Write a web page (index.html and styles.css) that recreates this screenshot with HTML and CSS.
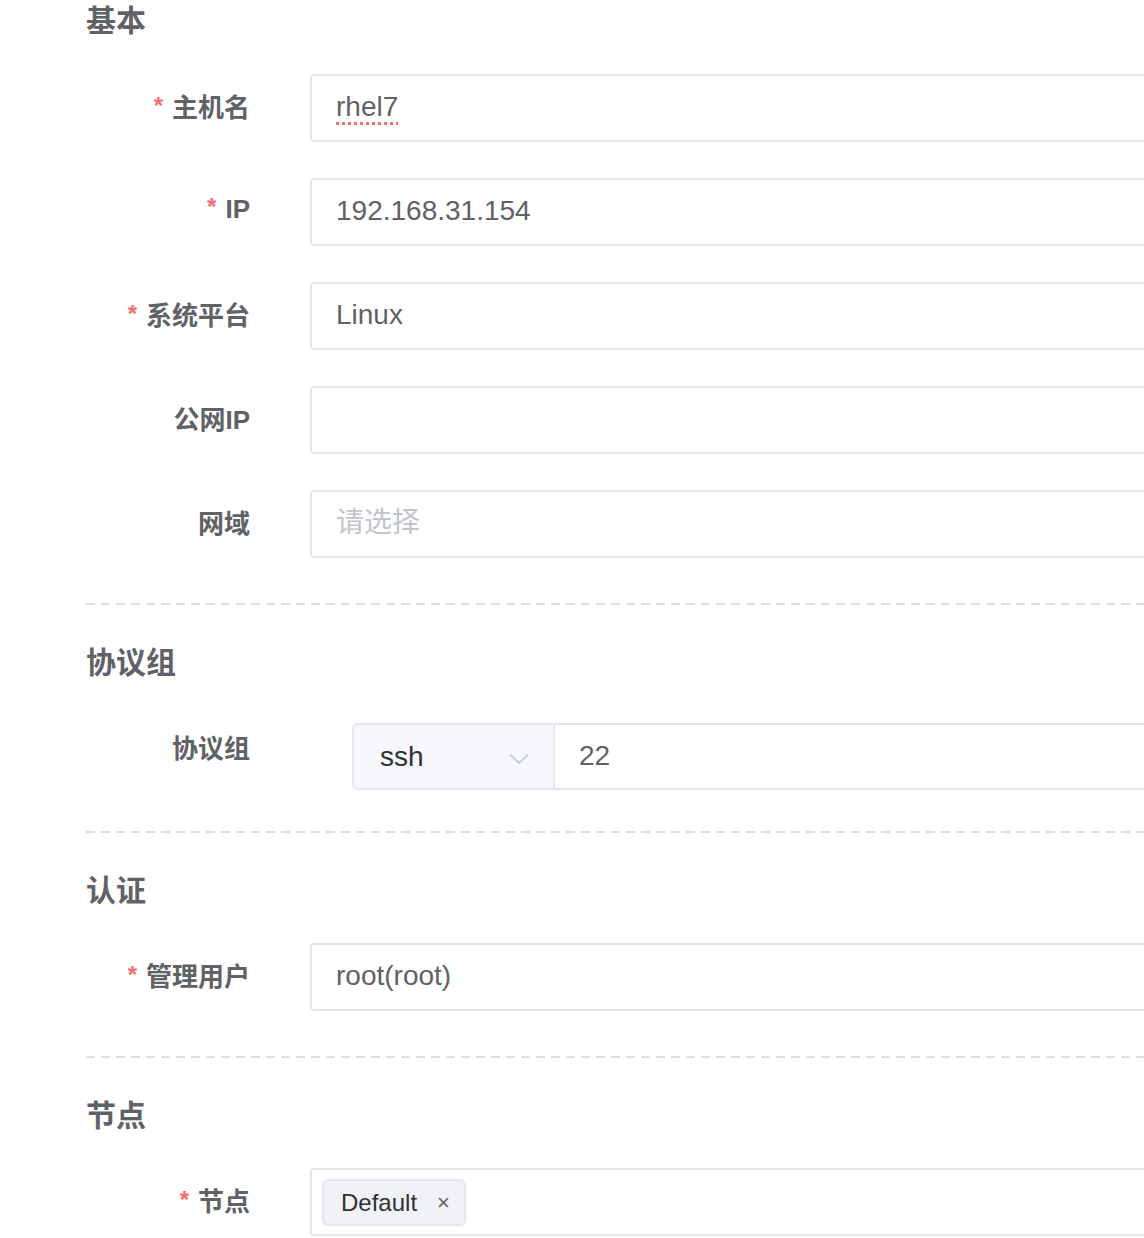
FILE: index.html
```html
<!DOCTYPE HTML>
<html>
<head>
  <title>创建资产</title>
  <meta charset="utf-8">
  <link rel="stylesheet" href="styles.css">
</head>
<body>
  <div class="form">
    <div class="section">
      <h3 class="section-title">基本</h3>
      <div class="form-item">
        <label class="item-label"><span class="req">*</span>主机名</label>
        <div class="input"><span class="misspelled">rhel7</span></div>
      </div>
      <div class="form-item">
        <label class="item-label"><span class="req">*</span>IP</label>
        <div class="input">192.168.31.154</div>
      </div>
      <div class="form-item">
        <label class="item-label"><span class="req">*</span>系统平台</label>
        <div class="input">Linux</div>
      </div>
      <div class="form-item">
        <label class="item-label">公网IP</label>
        <div class="input"></div>
      </div>
      <div class="form-item">
        <label class="item-label">网域</label>
        <div class="input placeholder">请选择</div>
      </div>
    </div>
    <div class="divider"></div>

    <div class="section">
      <h3 class="section-title">协议组</h3>
      <div class="form-item protocol-item">
        <label class="item-label">协议组</label>
        <div class="input-group">
          <div class="group-select">
            <span>ssh</span>
            <svg class="chevron" width="20" height="12" viewBox="0 0 20 12"><path d="M1 1.5 L10 10 L19 1.5" fill="none" stroke="#c0c4cc" stroke-width="1.6"/></svg>
          </div>
          <div class="input group-input">22</div>
        </div>
      </div>
    </div>
    <div class="divider"></div>

    <div class="section">
      <h3 class="section-title">认证</h3>
      <div class="form-item">
        <label class="item-label"><span class="req">*</span>管理用户</label>
        <div class="input">root(root)</div>
      </div>
    </div>
    <div class="divider"></div>

    <div class="section">
      <h3 class="section-title">节点</h3>
      <div class="form-item">
        <label class="item-label"><span class="req">*</span>节点</label>
        <div class="input tags-input">
          <span class="tag">Default<span class="tag-close">×</span></span>
        </div>
      </div>
    </div>
  </div>
</body>
</html>
```

FILE: styles.css
```css
* {
  box-sizing: border-box;
}
html, body {
  margin: 0;
  padding: 0;
  overflow: hidden;
  background: #fff;
}
body {
  font-family: "Liberation Sans", "Noto Sans CJK SC", sans-serif;
  color: #606266;
}
.form {
  width: 1240px;
  padding-left: 86px;
}
.section-title {
  margin: 0 0 31px 0;
  height: 42px;
  line-height: 42px;
  font-size: 30px;
  font-weight: bold;
  color: #606266;
}
.section {
  padding-top: 37px;
  padding-bottom: 9px;
}
.section:first-child {
  padding-top: 0;
}
.section:first-child .section-title {
  margin-bottom: 32px;
}
.form-item {
  display: flex;
  align-items: center;
  margin-bottom: 36px;
}
.item-label {
  width: 224px;
  flex: none;
  padding-right: 60px;
  padding-bottom: 5px;
  text-align: right;
  font-size: 26px;
  font-weight: bold;
  color: #606266;
}
.req {
  color: #f56c6c;
  font-size: 24px;
  font-weight: bold;
  margin-right: 9px;
  position: relative;
  top: -3px;
}
.input {
  flex: 1;
  height: 68px;
  line-height: 62px;
  border: 2px solid #e4e4e4;
  border-radius: 4px;
  padding: 0 24px;
  font-size: 28px;
  color: #606266;
  background: #fff;
}
.placeholder {
  color: #c0c4cc;
}
.misspelled {
  text-decoration: underline dotted #f56c6c;
  text-decoration-thickness: 3px;
  text-underline-offset: 6px;
}
.divider {
  height: 2px;
  background: repeating-linear-gradient(to right, #dcdfe6 0 9px, transparent 9px 15px);
}
.protocol-item {
  padding-top: 8px;
  margin-bottom: 32px;
}
.protocol-item .item-label {
  padding-bottom: 21px;
}
.input-group {
  flex: 1;
  display: flex;
  margin-left: 42px;
}
.group-select {
  width: 203px;
  flex: none;
  height: 67px;
  display: flex;
  align-items: center;
  justify-content: space-between;
  padding: 0 24px 0 26px;
  background: #f5f7fa;
  border: 2px solid #e4e7ed;
  border-radius: 6px 0 0 6px;
  font-size: 28px;
  color: #303133;
}
.chevron {
  margin-top: 4px;
}
.group-input {
  height: 67px;
  border-left: none;
  border-radius: 0 4px 4px 0;
}
.tags-input {
  display: flex;
  align-items: center;
  padding-left: 10px;
}
.tag {
  display: inline-flex;
  align-items: center;
  height: 47px;
  padding: 0 14px 0 17px;
  background: #f0f2f5;
  border: 2px solid #e4e7ed;
  border-radius: 6px;
  font-size: 24px;
  color: #303133;
  line-height: 43px;
}
.tag-close {
  margin-left: 20px;
  font-size: 22px;
  font-weight: lighter;
  color: #606266;
}
```
